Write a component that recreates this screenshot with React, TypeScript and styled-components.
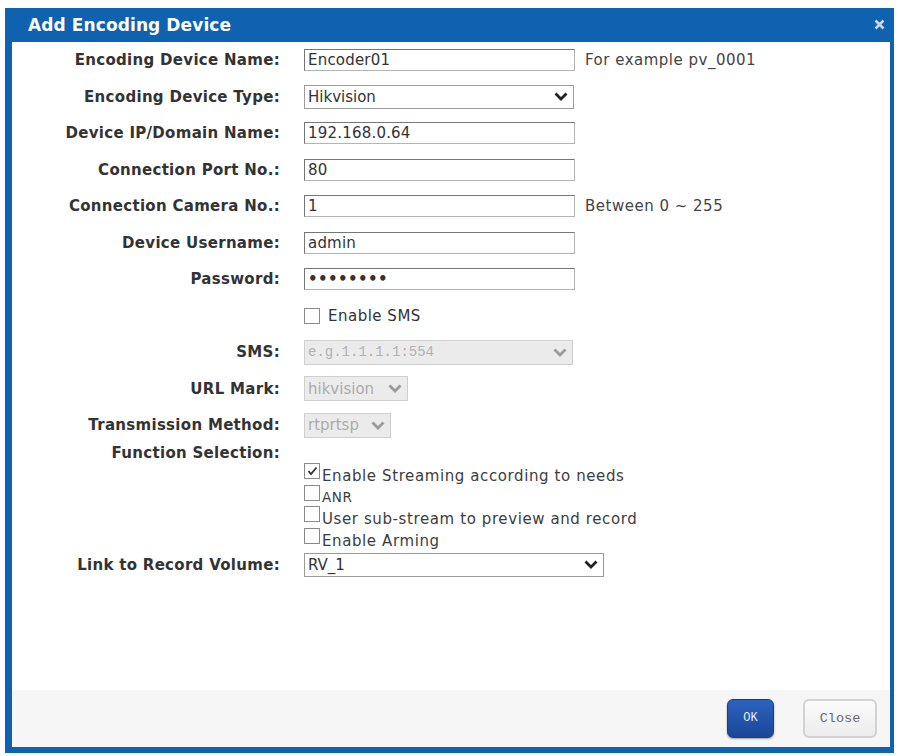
import React from 'react';
import styled, { createGlobalStyle } from 'styled-components';

const GlobalStyle = createGlobalStyle`
  html, body {
    margin: 0;
    padding: 0;
    background: #ffffff;
  }
  * {
    box-sizing: border-box;
  }
`;

const BLUE = '#0e62b0';
const SANS = '"DejaVu Sans", Verdana, sans-serif';
const MONO = '"Liberation Mono", "Courier New", monospace';

const Page = styled.div`
  padding: 8px 4px 3px 5px;
  font-family: ${SANS};
`;

const Dialog = styled.div`
  height: 745px;
  display: flex;
  flex-direction: column;
  border-left: 7px solid ${BLUE};
  border-right: 4px solid ${BLUE};
  border-bottom: 6px solid ${BLUE};
  background: #ffffff;
`;

const TitleBar = styled.div`
  height: 34px;
  flex: none;
  display: flex;
  align-items: center;
  justify-content: space-between;
  padding: 0 4px 0 16px;
  background: ${BLUE};
  color: #ffffff;
`;

const Title = styled.h1`
  margin: 0;
  font-size: 17px;
  font-weight: bold;
  letter-spacing: 0.1px;
`;

const CloseX = styled.button`
  width: 14px;
  height: 14px;
  padding: 0;
  border: none;
  background: none;
  display: flex;
  align-items: center;
  justify-content: center;
  margin-top: -2px;
`;

const Body = styled.div`
  flex: 1;
  display: flex;
  flex-direction: column;
`;

const Row = styled.div<{ h?: number }>`
  height: ${p => p.h ?? 36.5}px;
  display: flex;
  align-items: center;
`;

const TopRow = styled(Row)`
  height: auto;
  align-items: flex-start;
`;

const Label = styled.label`
  width: 268px;
  flex: none;
  margin-right: 24px;
  text-align: right;
  font-size: 15px;
  font-weight: bold;
  letter-spacing: 0.3px;
  color: #333333;
`;

const TextInput = styled.input<{ w?: number; dots?: boolean }>`
  width: ${p => p.w ?? 271}px;
  height: 22px;
  padding: 0 3px;
  border: 1px solid #b4b4b4;
  border-top-color: #767676;
  border-left-color: #767676;
  background: #ffffff;
  font-family: ${SANS};
  font-size: 15px;
  font-weight: ${p => (p.dots ? 'bold' : 'normal')};
  letter-spacing: ${p => (p.dots ? 0.4 : 0.2)}px;
  color: #333333;
  outline: none;
`;

const Hint = styled.span`
  margin-left: 10px;
  font-size: 15px;
  letter-spacing: 0.5px;
  color: #444444;
`;

const SelectBox = styled.div<{ w: number; off?: boolean }>`
  width: ${p => p.w}px;
  height: ${p => (p.off ? 25 : 24)}px;
  display: flex;
  align-items: center;
  justify-content: space-between;
  padding: 0 5px 0 3px;
  border: 1px solid ${p => (p.off ? '#cfcfcf' : '#9c9c9c')};
  background: ${p => (p.off ? '#ebebeb' : '#ffffff')};
  font-size: 15px;
  color: ${p => (p.off ? '#ababab' : '#333333')};
`;

const MonoText = styled.span`
  font-family: ${MONO};
  font-size: 14px;
  color: #b2b2b2;
`;

const Chevron = ({ off }: { off?: boolean }) => (
  <svg width="14" height="9" viewBox="0 0 14 9">
    <polyline
      points="1.5,1.5 7,7 12.5,1.5"
      fill="none"
      stroke={off ? '#9a9a9a' : '#222222'}
      strokeWidth="2.8"
    />
  </svg>
);

const Select = ({ w, value, off, mono }: { w: number; value: string; off?: boolean; mono?: boolean }) => (
  <SelectBox w={w} off={off}>
    {mono ? <MonoText>{value}</MonoText> : <span>{value}</span>}
    <Chevron off={off} />
  </SelectBox>
);

const Box = styled.span`
  width: 16px;
  height: 16px;
  flex: none;
  display: inline-flex;
  align-items: center;
  justify-content: center;
  border: 1px solid #8a8a8a;
  background: #ffffff;
`;

const Check = styled.label`
  display: flex;
  align-items: center;
  gap: 8px;
  font-size: 15px;
  letter-spacing: 0.5px;
  color: #333333;
`;

const OptionList = styled.div`
  display: flex;
  flex-direction: column;
`;

const Option = styled.label<{ small?: boolean }>`
  height: 21.5px;
  display: flex;
  align-items: flex-start;
  font-size: ${p => (p.small ? 13.5 : 15)}px;
  letter-spacing: 0.6px;
  line-height: 21.5px;
  color: #3d3d3d;
  span:last-child {
    margin-left: 2px;
    padding-top: ${p => (p.small ? 2 : 3)}px;
  }
`;

const Footer = styled.div`
  height: 57px;
  flex: none;
  display: flex;
  align-items: center;
  justify-content: flex-end;
  gap: 29px;
  padding: 0 13px 1px 0;
  background: #f6f6f6;
`;

const Button = styled.button<{ primary?: boolean }>`
  height: 39px;
  width: ${p => (p.primary ? 47 : 74)}px;
  border-radius: 6px;
  font-family: ${MONO};
  font-size: ${p => (p.primary ? 12 : 13.5)}px;
  cursor: pointer;
  color: ${p => (p.primary ? '#e8eefa' : '#6a6a6a')};
  border: ${p => (p.primary ? '1px solid #173f88' : '2px solid #d2d2d2')};
  background: ${p =>
    p.primary
      ? 'linear-gradient(#2c62bd, #1b4797)'
      : 'linear-gradient(#fbfbfb, #ececec)'};
  box-shadow: ${p => (p.primary ? '0 1px 2px rgba(0,0,0,0.35)' : 'none')};
`;

const options = [
  { text: 'Enable Streaming according to needs', checked: true },
  { text: 'ANR', small: true },
  { text: 'User sub-stream to preview and record' },
  { text: 'Enable Arming' },
];

const TickMark = () => (
  <svg width="11" height="10" viewBox="0 0 11 10">
    <polyline points="1.5,5 4,8 9.5,1.5" fill="none" stroke="#333" strokeWidth="1.8" />
  </svg>
);

export default function App() {
  return (
    <>
      <GlobalStyle />
      <Page>
        <Dialog>
          <TitleBar>
            <Title>Add Encoding Device</Title>
            <CloseX aria-label="close">
              <svg width="11" height="11" viewBox="0 0 11 11">
                <path d="M1.5 1.5 L9.5 9.5 M9.5 1.5 L1.5 9.5" stroke="#c8d5ea" strokeWidth="2.6" />
              </svg>
            </CloseX>
          </TitleBar>

          <Body>
            <Row>
              <Label>Encoding Device Name:</Label>
              <TextInput readOnly value="Encoder01" />
              <Hint>For example pv_0001</Hint>
            </Row>
            <Row>
              <Label>Encoding Device Type:</Label>
              <Select w={270} value="Hikvision" />
            </Row>
            <Row>
              <Label>Device IP/Domain Name:</Label>
              <TextInput readOnly value="192.168.0.64" />
            </Row>
            <Row>
              <Label>Connection Port No.:</Label>
              <TextInput readOnly value="80" />
            </Row>
            <Row>
              <Label>Connection Camera No.:</Label>
              <TextInput readOnly value="1" />
              <Hint>Between 0 ~ 255</Hint>
            </Row>
            <Row>
              <Label>Device Username:</Label>
              <TextInput readOnly value="admin" />
            </Row>
            <Row>
              <Label>Password:</Label>
              <TextInput readOnly dots value={'\u2022\u2022\u2022\u2022\u2022\u2022\u2022\u2022'} />
            </Row>
            <Row>
              <Label />
              <Check>
                <Box />
                <span>Enable SMS</span>
              </Check>
            </Row>
            <Row>
              <Label>SMS:</Label>
              <Select w={269} value="e.g.1.1.1.1:554" off mono />
            </Row>
            <Row>
              <Label>URL Mark:</Label>
              <Select w={104} value="hikvision" off />
            </Row>
            <Row>
              <Label>Transmission Method:</Label>
              <Select w={87} value="rtprtsp" off />
            </Row>
            <Row h={19.5}>
              <Label>Function Selection:</Label>
            </Row>
            <TopRow>
              <Label />
              <OptionList>
                {options.map(o => (
                  <Option key={o.text} small={o.small}>
                    <Box>{o.checked && <TickMark />}</Box>
                    <span>{o.text}</span>
                  </Option>
                ))}
              </OptionList>
            </TopRow>
            <Row h={31}>
              <Label>Link to Record Volume:</Label>
              <Select w={300} value="RV_1" />
            </Row>
          </Body>

          <Footer>
            <Button primary>OK</Button>
            <Button>Close</Button>
          </Footer>
        </Dialog>
      </Page>
    </>
  );
}
